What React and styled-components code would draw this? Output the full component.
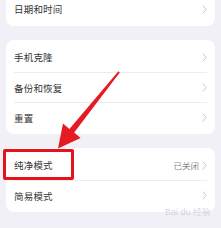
import styled, { createGlobalStyle } from "styled-components";

const Global = createGlobalStyle`
  html, body {
    margin: 0;
    padding: 0;
    background: #f1f0f7;
    font-family: "Noto Sans CJK SC", "Noto Sans", sans-serif;
    overflow: hidden;
  }
`

const Page = styled.div`
  position: relative;
  width: 221px;
  height: 228px;
  padding: 0 6px;
  box-sizing: border-box;
  display: flex;
  flex-direction: column;
  gap: 14px;
`

const Card = styled.div`
  background: #fff;
  border-radius: 8px;
  padding: 2px 0;
  margin-top: ${props => props.top || 0}px;
`

const Row = styled.div`
  height: 30px;
  display: flex;
  align-items: center;
  margin: 0 8px;
  border-top: ${props => props.first ? "none" : "1px solid #ededf1"};
  box-sizing: border-box;
`

const Label = styled.span`
  flex: 1;
  font-size: 9.5px;
  color: #333;
  letter-spacing: 0.2px;
`

const Value = styled.span`
  font-size: 8.5px;
  color: #8a8a8a;
  margin-right: 3px;
`

const Highlight = styled.div`
  position: absolute;
  left: 3px;
  top: 149px;
  width: 71px;
  height: 31px;
  border: 3px solid #e5121c;
  border-radius: 2px;
  box-sizing: border-box;
`

const Overlay = styled.svg`
  position: absolute;
  left: 0;
  top: 0;
  pointer-events: none;
`

const Watermark = styled.div`
  position: absolute;
  right: 10px;
  top: 206px;
  font-family: "Liberation Sans", sans-serif;
  font-size: 9px;
  color: rgba(195, 195, 205, 0.7);
`

const Chevron = () => (
  <svg width="5" height="9" viewBox="0 0 5 9">
    <path d="M0.8 0.6 L4.2 4.5 L0.8 8.4" fill="none" stroke="#c2c2c6" strokeWidth="0.9" />
  </svg>
)

const Item = ({ label, value, first }) => (
  <Row first={first}>
    <Label>{label}</Label>
    {value ? <Value>{value}</Value> : null}
    <Chevron />
  </Row>
)

const App = () => {
  return (
    <>
      <Global />
      <Page>
        <Card top={-8}>
          <Item first label="日期和时间" />
        </Card>
        <Card>
          <Item first label="手机克隆" />
          <Item label="备份和恢复" />
          <Item label="重置" />
        </Card>
        <Card>
          <Item first label="纯净模式" value="已关闭" />
          <Item label="简易模式" />
        </Card>
        <Highlight />
        <Overlay width="221" height="228" viewBox="0 0 221 228">
          <polygon
            points="118.4,71.2 69.4,129 63,123.6 58,148.5 80.6,138 74.2,132.6 119.8,72.6"
            fill="#e41b23"
          />
        </Overlay>
        <Watermark>Bai du 经验</Watermark>
      </Page>
    </>
  )
}

export default App;
